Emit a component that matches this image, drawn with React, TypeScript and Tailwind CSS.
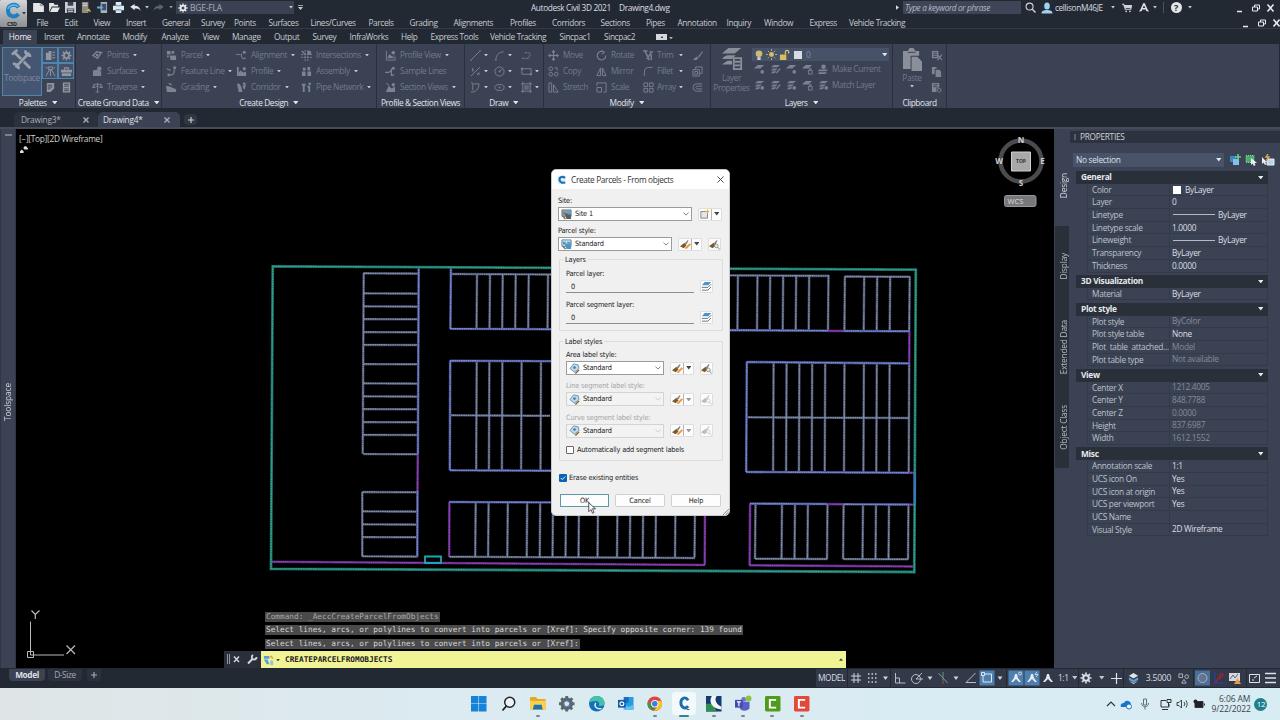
import type { ReactNode } from 'react'
import clsx from 'clsx'

type Item = { label: string; w: number }

const menu: Item[] = [
  { label: 'File', w: 28 },
  { label: 'Edit', w: 29 },
  { label: 'View', w: 32.5 },
  { label: 'Insert', w: 36 },
  { label: 'General', w: 39 },
  { label: 'Survey', w: 33 },
  { label: 'Points', w: 34.5 },
  { label: 'Surfaces', w: 42 },
  { label: 'Lines/Curves', w: 58 },
  { label: 'Parcels', w: 41 },
  { label: 'Grading', w: 44 },
  { label: 'Alignments', w: 56.5 },
  { label: 'Profiles', w: 42 },
  { label: 'Corridors', w: 48.5 },
  { label: 'Sections', w: 45.5 },
  { label: 'Pipes', w: 31.5 },
  { label: 'Annotation', w: 49 },
  { label: 'Inquiry', w: 37.5 },
  { label: 'Window', w: 45.5 },
  { label: 'Express', w: 39.5 },
  { label: 'Vehicle Tracking', w: 60 },
]

const ribbonTabs: Item[] = [
  { label: 'Insert', w: 33 },
  { label: 'Annotate', w: 45.5 },
  { label: 'Modify', w: 39 },
  { label: 'Analyze', w: 41 },
  { label: 'View', w: 29.5 },
  { label: 'Manage', w: 42 },
  { label: 'Output', w: 38.5 },
  { label: 'Survey', w: 37 },
  { label: 'InfraWorks', w: 51.5 },
  { label: 'Help', w: 29.5 },
  { label: 'Express Tools', w: 59.5 },
  { label: 'Vehicle Tracking', w: 69.5 },
  { label: 'Sincpac1', w: 44.5 },
  { label: 'Sincpac2', w: 52 },
]

const S = { fill: 'none', stroke: 'currentColor', strokeWidth: 1 }

const layerStack = (
  <>
    <path d="M4 1h7L8 3.500H1zM3 5h5.500L6 7H1zM3 8h4L5 10H1z" fill="currentColor" />
  </>
)

// 12x12 glyphs
const glyphs: Record<string, ReactNode> = {
  points: <><path d="M1 6l4-4 5 1-4 6z" {...S} strokeWidth={1.500} /><circle cx="5.500" cy="5.500" r="1.500" fill="currentColor" /><path d="M9 0l1 2 2 .5-2 1z" fill="currentColor" /></>,
  surfaces: <><path d="M1 5l4-1 5 2v5H1z" fill="currentColor" /><circle cx="8" cy="3" r="2.500" fill="currentColor" /></>,
  traverse: <path d="M6 1v10M2 2.500h8M2 3L.5 6h3zM10 3L8.500 6h3zM4 11h4M4.500 5h3" {...S} />,
  parcel: <path d="M1 1h4v4H1zM6 1h3v3H6zM4 6h7v5H5zM1 6h2v2H1z" fill="currentColor" />,
  feature: <><path d="M1 3l4 2M4 10c5 0 5-3 5-6" {...S} strokeWidth={1.300} /><circle cx="9.500" cy="2" r="1.700" fill="currentColor" /><circle cx="3" cy="9.800" r="1.500" fill="currentColor" /></>,
  grading: <><path d="M0 4l4 1 7 3v3H1z" fill="currentColor" /><path d="M2 2l3-1 2 3z" fill="currentColor" /></>,
  align: <><path d="M0 5h5M7 9h4M6 4v4l3 2" {...S} /><circle cx="9" cy="2.500" r="1.700" fill="currentColor" /></>,
  profile: <><path d="M1 1v10h10V6L8 7 5 5 3 7V1z" fill="currentColor" /><circle cx="9" cy="3" r="1.800" fill="currentColor" /></>,
  corridor: <><path d="M1 2h3l2 4 1 5H3z" fill="currentColor" /><path d="M7 4l4-1-2 6z" fill="currentColor" /><circle cx="9" cy="2" r="1.500" fill="currentColor" /></>,
  intersect: <><path d="M4.500 0v12M7.500 0v12M0 5h12M0 8h12" {...S} strokeDasharray="2.500 .8" /><circle cx="9" cy="3" r="2.200" fill="currentColor" /><path d="M1 1l3 3" {...S} strokeWidth={1.500} /></>,
  assembly: <path d="M1 6h4v5H1zM7 6h4v5H7zM2 2h3v3H2zM7 1h3v4H7z" fill="currentColor" />,
  pipe: <><path d="M1 2h4v2H4v7H2V4H1zM7 4h3v7H8V6H7z" fill="currentColor" /><circle cx="9.500" cy="2" r="1.500" fill="currentColor" /></>,
  pview: <><path d="M1.500 1v10H11V7M3 9l2-4 3 3 2-2" {...S} /><circle cx="9" cy="3" r="2" fill="currentColor" /><path d="M3 9l2-4 5 4z" fill="currentColor" /></>,
  sample: <><path d="M0 7h4l3-2M7 3v8M7 10h3" {...S} strokeWidth={1.300} /><circle cx="9" cy="2.500" r="1.700" fill="currentColor" /></>,
  section: <><path d="M1 11L4 4l3 3 4-2v6z" fill="currentColor" /><circle cx="9" cy="3" r="1.800" fill="currentColor" /><path d="M1 1l4 3" {...S} /></>,
  line: <path d="M1.500 10.500l9-9M0 11h2M10 1h2" {...S} />,
  arc: <><path d="M2 11C2 6 5 2 10.500 2" {...S} /><circle cx="2" cy="11" r=".8" fill="currentColor" /></>,
  pline: <path d="M1 9h9M4 3h4c3 0 3 4 0 4" {...S} strokeDasharray="3 1" />,
  xline: <path d="M1 11L11 1M2 3l2 2M3 2v4M8 8l3 1M8 10l2-3" {...S} />,
  circle: <><circle cx="6" cy="6" r="5" {...S} /><path d="M6 6l3-3" {...S} /><circle cx="6" cy="6" r="1" fill="currentColor" /></>,
  rect: <><path d="M1 3h10v6H1z" {...S} /><path d="M0 2h2v2H0zM10 8h2v2h-2z" fill="currentColor" /></>,
  poly: <path d="M1 1h2M1 11c6 0 8-3 9-9H3v7" {...S} />,
  ellipse: <><ellipse cx="6" cy="6" rx="5" ry="3.300" {...S} /><circle cx="6" cy="6" r="1" fill="currentColor" /></>,
  hatch: <><path d="M2 0v12M10 0v12M0 2h12M0 10h12" {...S} /><path d="M3.500 3.500h5v5h-5z" fill="currentColor" opacity=".6" /></>,
  move: <path d="M6 1v10M1 6h10M4.500 2.500L6 1l1.500 1.500M4.500 9.500L6 11l1.500-1.500M2.500 4.500L1 6l1.500 1.500M9.500 4.500L11 6 9.500 7.500" {...S} strokeWidth={1.300} />,
  rotate: <path d="M9 2.500A4.700 4.700 0 1010.700 6M6 .5l3 2-2.500 2" {...S} strokeWidth={1.200} />,
  trim: <path d="M0 1h5M2 1l5 10M9 3L4 10M7 2h4M9 5v6" {...S} strokeWidth={1.500} />,
  erase: <path d="M11.500 1L7 6.500 5.500 9 8 7.500 12 2zM5 7l2 2-2 2H1z" fill="currentColor" />,
  copy: <><circle cx="3" cy="3" r="2" {...S} /><circle cx="9" cy="9" r="2" {...S} /><circle cx="3" cy="9" r="2" {...S} /><path d="M7 2h3v3" {...S} /></>,
  mirror: <path d="M5 2v8.500H1zM7 2v8.500h4z" {...S} />,
  fillet: <path d="M1.500 11V7c0-4 2-5.500 5-5.500h4" {...S} />,
  explode: <path d="M1 4h7v7H1zM4 4V1h7v7H8M3 6h3v3H3z" {...S} />,
  stretch: <path d="M1 1h3v10H1zM6 3l5 8H6z" {...S} />,
  scale: <path d="M1 6h5v5H1zM1 4V1h10v10H8" {...S} />,
  array: <path d="M1 1h4v4H1zM7 1h4v4H7zM1 7h4v4H1zM7 7h4v4H7z" {...S} />,
  offset: <path d="M11 2H5C0 2 0 10 5 10h6M11 4.500H6c-2.500 0-2.500 3 0 3h5" {...S} />,
  layA: <><path d="M4 1h7L7 5H0z" fill="currentColor" /><circle cx="9" cy="8.500" r="2" fill="currentColor" /></>,
  layB: <>{layerStack}<path d="M11 5l-4 5" {...S} strokeWidth={1.500} /></>,
  layC: <>{layerStack}<circle cx="9" cy="8.500" r="2" fill="currentColor" /></>,
  layD: <><path d="M4 1h7L7 5H0z" fill="currentColor" /><path d="M7 7h4v4H7zM8 7V5h2v2" {...S} /></>,
  current: <><circle cx="6" cy="3" r="2.500" fill="currentColor" /><path d="M1 6h10L9 8H0zM1 9h9l-2 2H0z" fill="currentColor" /></>,
  cut: <><path d="M1 1h7v8H1z" fill="currentColor" /><path d="M2.500 3h4M2.500 5h4M2.500 7h4" stroke="#3b4252" /><path d="M7 5l5 6M12 5l-5 6" {...S} strokeWidth={1.300} /></>,
  clip: <path d="M1 1h5v2H4v6H1zM5 4h4l2 2v6H5z" fill="currentColor" />,
  special: <><path d="M1 1h8v5H6v5H1z" fill="currentColor" /><path d="M2.500 3h5M2.500 5h4" stroke="#3b4252" /><circle cx="9" cy="9" r="2" {...S} /></>,
  prospector: <path d="M1 3h3V1h3v10H1zM8 2h3v1H8zM8 5h3v1H8zM8 8h3v1H8z" fill="currentColor" />,
  gear: <><circle cx="6" cy="6" r="2.800" {...S} strokeWidth={2} /><path d="M6 .5v11M.5 6h11M2 2l8 8M10 2l-8 8" {...S} strokeWidth={1.600} strokeDasharray="2 7.300" /></>,
  tripod: <path d="M4 1h4v3H4zM6 4v7M5 4l-4 7M7 4l4 7M1 2h2M9 2h2" {...S} />,
  toolbox: <><path d="M0 4h12v3H0zM1 8h10v3H1z" fill="currentColor" /><path d="M4 4V2h4v2" {...S} strokeWidth={1.300} /></>,
  note: <><path d="M2 1h8v6l-4 4H2z" fill="currentColor" /><path d="M3 3.500h5M3 5.500h5M3 7.500h3" stroke="#3b4252" /></>,
  sheet: <><path d="M2 .5h8v11H2z" fill="currentColor" /><path d="M3.500 2.500h5M3.500 4.500h5M3.500 7.500h5M3.500 9.500h5" stroke="#3b4252" /></>,
}

function Ico({ n, className = 'size-[11px] text-[#7d8391]' }: { n: string; className?: string }) {
  return (
    <svg viewBox="0 0 12 12" className={clsx('shrink-0', className)}>
      {glyphs[n]}
    </svg>
  )
}

function Caret({ className = 'text-[#c3c8d0]', big = false }: { className?: string; big?: boolean }) {
  return (
    <svg viewBox="0 0 6 4" className={clsx('shrink-0', big ? 'h-[3.500px] w-[5.500px]' : 'h-[2.500px] w-[4px]', className)}>
      <path d="M0 0h6L3 4z" fill="currentColor" />
    </svg>
  )
}

function Slot({ w = 16, children }: { w?: number; children?: ReactNode }) {
  return (
    <div className="flex h-full shrink-0 items-center justify-center" style={{ width: w }}>
      {children}
    </div>
  )
}

function WinButtons({ small = false }: { small?: boolean }) {
  return (
    <svg viewBox="0 0 44 12" className={clsx('h-3 w-11 shrink-0 text-[#e8eaed]', small && '-mr-1')}>
      <path d="M4 9.500h5" stroke="currentColor" strokeWidth="1.500" />
      <path d="M19.500 5h5v4h-5zM21.500 5V3h5v4h-2" fill="none" stroke="currentColor" />
      <path d="M34.500 2.500l6 7M40.500 2.500l-6 7" stroke="currentColor" strokeWidth="1.600" />
    </svg>
  )
}

function TitleBar() {
  return (
    <div className="flex h-[15px] items-center pl-[3px] text-[#d8dbe0]">
      <Slot><svg viewBox="0 0 12 10" className="h-[9px] w-[11px]"><path d="M0 0h8l4 3v7H0z" fill="#e4e6e8" /><path d="M8 0v3h4" fill="none" stroke="#888" /></svg></Slot>
      <Slot><svg viewBox="0 0 12 10" className="h-[9px] w-[11px]"><path d="M0 0h5l1 2h4v2H3L0 10z" fill="#e4e6e8" /><path d="M3.500 5H12l-2.500 5H1z" fill="#e4e6e8" /></svg></Slot>
      <Slot><svg viewBox="0 0 12 12" className="size-[11px]"><path d="M0 0h12v12H0z" fill="#c9ccd1" /><path d="M3 0h6v4H3zM2 7h8v5H2z" fill="#3a414d" /><path d="M3 8.500h6M3 10.500h6" stroke="#ddd" /></svg></Slot>
      <Slot><svg viewBox="0 0 12 12" className="size-[11px]"><path d="M1 0h7v12H1z" fill="#8e8b80" /><path d="M2 2h5M2 4h5" stroke="#ddd" /><path d="M5 9l4-2 2 4z" fill="#e0a94e" /></svg></Slot>
      <Slot><svg viewBox="0 0 12 12" className="size-[11px]"><path d="M4 0h7v12H4z" fill="#a9b1ba" /><path d="M5 2h5v7H5z" fill="#36526e" /><path d="M0 5h4V3l3 3-3 3V7H0z" fill="#67a6db" /></svg></Slot>
      <Slot><svg viewBox="0 0 12 12" className="size-[11px]"><path d="M3 0h6v4H3zM0 4h12v5H0zM3 8h6v4H3z" fill="#e4e6e8" /><path d="M3 4h6M3 8.500h6" stroke="#6aa9d8" strokeWidth="1.500" /></svg></Slot>
      <Slot w={18}><svg viewBox="0 0 12 8" className="h-[7px] w-[11px]"><path d="M0 3l5-3v2c4 0 6 2 7 6-2-3-4-3-7-3v2z" fill="#e4e6e8" /></svg></Slot>
      <Slot w={5}><Caret /></Slot>
      <Slot w={19}><svg viewBox="0 0 12 8" className="h-[7px] w-[11px]"><path d="M12 3L7 0v2C3 2 1 4 0 8c2-3 4-3 7-3v2z" fill="#5d6470" /></svg></Slot>
      <Slot w={5}><Caret className="text-[#8e939c]" /></Slot>
      <div className="ml-[3px] flex h-[13px] w-[118px] items-center bg-[#3a4153] pl-[2px] pr-[1px] text-[#a9aebb]">
        <Ico n="gear" className="mr-[2px] size-[10px] text-[#eceef0]" />
        <span className="flex-1 text-[8.500px] tracking-[-0.200px]">BGE-FLA</span>
        <Caret />
      </div>
      <svg viewBox="0 0 6 6" className="ml-1 size-[5px]"><path d="M0 .5h6" stroke="#ccc" /><path d="M0 2.500h6L3 6z" fill="#ccc" /></svg>
      <div className="ml-[228px] flex w-[365px] gap-2 whitespace-pre pt-px text-[#dcdfe3]">
        <span className="w-[80px]">Autodesk Civil 3D 2021</span>
        <span>Drawing4.dwg</span>
      </div>
      <svg viewBox="0 0 4 6" className="h-[5px] w-[3px]"><path d="M0 0v6l4-3z" fill="#dcdfe3" /></svg>
      <div className="ml-1 flex h-[13px] w-[118px] items-center bg-[#3e4557] pl-[2px] italic text-[#b4b9c4]">Type a keyword or phrase</div>
      <Slot w={18}><svg viewBox="0 0 12 12" className="size-[11px]"><circle cx="5" cy="5" r="3.800" fill="none" stroke="#d0d3d8" strokeWidth="1.200" /><path d="M8 8l3.500 3.500" stroke="#d0d3d8" strokeWidth="1.600" /></svg></Slot>
      <Slot w={15}><svg viewBox="0 0 12 12" className="size-[12px]"><ellipse cx="6" cy="4" rx="2.800" ry="3.500" fill="#9fd0f2" /><path d="M.5 11.500c0-3 3-3.500 5.500-3.500s5.500.5 5.500 3.500z" fill="#9fd0f2" /></svg></Slot>
      <span className="ml-[1px] w-[56px]">cellisonM46JE</span>
      <Caret />
      <Slot w={24}><svg viewBox="0 0 12 12" className="size-[10px]"><path d="M0 1.500h2l2 6h6.500l1-4.500H3" fill="none" stroke="#cfd2d6" strokeWidth="1.400" /><path d="M3 3.500h8.500L10.500 6H4z" fill="#cfd2d6" /><circle cx="5" cy="10" r="1.100" fill="#cfd2d6" /><circle cx="9.500" cy="10" r="1.100" fill="#cfd2d6" /></svg></Slot>
      <Slot w={10}><svg viewBox="0 0 12 12" className="size-[11px]"><path d="M6 1l4 9M6 1L2 10M3.500 7.500h5" fill="none" stroke="#dfe1e4" strokeWidth="1.800" /><path d="M0 11l1.500-2.500L4 10zM12 11l-1.500-2.500L8 10z" fill="#dfe1e4" /></svg></Slot>
      <Slot w={12}><Caret /></Slot>
      <div className="ml-[2px] h-[11px] w-px bg-[#4b525e]" />
      <Slot w={24}><div className="flex size-[11px] items-center justify-center rounded-full bg-[#e4e6e8] text-[9px] font-bold text-[#222933]">?</div></Slot>
      <Caret />
      <div className="ml-auto pr-[3px]"><WinButtons /></div>
    </div>
  )
}

function AppHeader() {
  return (
    <header className="flex h-[29px] border-b border-[#343b46]">
      <div className="flex h-[27px] w-[27px] shrink-0 items-center rounded-[1px] bg-gradient-to-b from-[#d4d6d9] to-[#8d9095] pl-[4px]">
        <svg viewBox="0 0 18 26" className="h-[26px] w-[18px]">
          <path d="M14.500 6.500C12 2 4 3 4 9.500S11 17 14.500 13" fill="none" stroke="#1f7fc0" strokeWidth="4" />
          <path d="M14 5.500C11 2.500 5 4 4 8" fill="none" stroke="#56b6e6" strokeWidth="2" />
          <text x="3" y="25" fontSize="5.500" fontWeight="700" fill="#222" fontFamily="Open Sans">C3D</text>
        </svg>
        <Caret className="text-[#333]" />
      </div>
      <div className="flex-1">
        <TitleBar />
        <nav className="flex h-[15px] items-center pl-[9.500px] text-[#c6cad1]">
          {menu.map((m) => (
            <span key={m.label} className="shrink-0 whitespace-nowrap" style={{ width: m.w }}>{m.label}</span>
          ))}
          <div className="ml-auto pr-[1px]"><WinButtons small /></div>
        </nav>
      </div>
    </header>
  )
}

function Tool({ icon, label, caret = true, w }: { icon: string; label: string; caret?: boolean; w?: number }) {
  return (
    <div className="flex h-4 items-center whitespace-nowrap" style={{ width: w }}>
      <Ico n={icon} className="mr-1 size-[11px] text-[#7d8391]" />
      <span className={caret ? 'mr-1' : ''}>{label}</span>
      {caret && <Caret />}
    </div>
  )
}

function Panel({ title, w, caret = true, titleW, children }: { title: string; w?: number; caret?: boolean; titleW?: number; children: ReactNode }) {
  return (
    <section className="flex shrink-0 flex-col border-r border-[#2a303b]" style={{ width: w }}>
      <div className="flex h-[53px] pt-[3px]">{children}</div>
      <div className="flex h-[11px] items-center justify-center gap-[5px] whitespace-nowrap text-[#e3e6ea]" style={{ width: titleW }}>
        {title}
        {caret && <Caret big className="text-[#e3e6ea]" />}
      </div>
    </section>
  )
}

function IconBtn({ n, on = true }: { n: string; on?: boolean }) {
  return (
    <div className={clsx('flex size-4 items-center justify-center border', on ? 'border-[#4d85ad] bg-[#43516b]' : 'border-transparent')}>
      <Ico n={n} className="size-[11px] text-[#9297a1]" />
    </div>
  )
}

const draw = [
  ['line', 'arc', 'pline'],
  ['xline', 'circle', 'rect'],
  ['poly', 'ellipse', 'hatch'],
]

function Ribbon() {
  return (
    <div className="flex h-[64px] border-r border-[#222933] bg-[#3b4253] pl-[1px] text-[#737a8a]">
      <Panel title="Palettes" w={75}>
        <div className="ml-px flex h-[49px] w-[40px] flex-col items-center border border-[#4d85ad] bg-[#455672]">
          <svg viewBox="0 0 24 24" className="mt-[1px] size-[22px]" fill="none" stroke="#9aa0aa" strokeWidth="3">
            <path d="M3 3l8 8M14 14l7 7" />
            <path d="M20 4L5 20M16 1.500c-1 3 2 6.500 6 5.500M8 22c1-3-2-6.500-6-5.500" />
            <path d="M1 6l6-5" />
          </svg>
          <span className="mt-[1px] text-[#7f8899]">Toolspace</span>
        </div>
        <div className="grid h-fit grid-cols-2">
          <IconBtn n="prospector" />
          <IconBtn n="gear" />
          <IconBtn n="tripod" />
          <IconBtn n="toolbox" />
          <IconBtn n="note" on={false} />
          <IconBtn n="sheet" on={false} />
        </div>
      </Panel>
      <Panel title="Create Ground Data" w={86}>
        <div className="pl-4">
          <Tool icon="points" label="Points" />
          <Tool icon="surfaces" label="Surfaces" />
          <Tool icon="traverse" label="Traverse" />
        </div>
      </Panel>
      <Panel title="Create Design" w={215}>
        <div className="w-[74px] pl-[4px]">
          <Tool icon="parcel" label="Parcel" />
          <Tool icon="feature" label="Feature Line" />
          <Tool icon="grading" label="Grading" />
        </div>
        <div className="w-[65px]">
          <Tool icon="align" label="Alignment" />
          <Tool icon="profile" label="Profile" />
          <Tool icon="corridor" label="Corridor" />
        </div>
        <div>
          <Tool icon="intersect" label="Intersections" />
          <Tool icon="assembly" label="Assembly" />
          <Tool icon="pipe" label="Pipe Network" />
        </div>
      </Panel>
      <Panel title="Profile & Section Views" w={88} caret={false}>
        <div className="pl-[8px]">
          <Tool icon="pview" label="Profile View" />
          <Tool icon="sample" label="Sample Lines" caret={false} />
          <Tool icon="section" label="Section Views" />
        </div>
      </Panel>
      <Panel title="Draw" w={79}>
        <div className="pl-[5px]">
          {draw.map((row, r) => (
            <div key={r} className="flex h-4 items-center">
              {row.map((n, i) => (
                <div key={n} className={clsx('flex items-center gap-[3px]', i === 0 ? 'w-6' : 'w-[27px]')}>
                  <Ico n={n} />
                  {!(r === 0 && i === 2) && <Caret />}
                </div>
              ))}
            </div>
          ))}
        </div>
      </Panel>
      <Panel title="Modify" w={167}>
        <div className="w-[52px] pl-[4px]">
          <Tool icon="move" label="Move" caret={false} />
          <Tool icon="copy" label="Copy" caret={false} />
          <Tool icon="stretch" label="Stretch" caret={false} />
        </div>
        <div className="w-[47px]">
          <Tool icon="rotate" label="Rotate" caret={false} />
          <Tool icon="mirror" label="Mirror" caret={false} />
          <Tool icon="scale" label="Scale" caret={false} />
        </div>
        <div className="w-[49px]">
          {[['trim', 'Trim'], ['fillet', 'Fillet'], ['array', 'Array']].map(([n, label]) => (
            <div key={n} className="flex h-4 w-[40px] items-center gap-[3px]">
              <Ico n={n} />
              <span className="flex-1">{label}</span>
              <Caret />
            </div>
          ))}
        </div>
        <div className="[&>div]:flex [&>div]:h-4 [&>div]:items-center">
          <div><Ico n="erase" /></div>
          <div><Ico n="explode" /></div>
          <div><Ico n="offset" /></div>
        </div>
      </Panel>
      <Panel title="Layers" w={182}>
        <div className="flex w-[41px] flex-col items-center leading-[10px]">
          <svg viewBox="0 0 24 24" className="mb-[3px] mt-[1px] size-[22px] text-[#8a8f9a]">
            <path d="M8 0h14l-7 6H1zM7 8h9l-4 4H1l3-3zM7 14h5v4H1z" fill="currentColor" />
            <path d="M14 11h8v12h-8z" fill="#3b4253" stroke="currentColor" strokeWidth="2" />
            <path d="M15 15h6M15 19h6" stroke="currentColor" strokeWidth="2" />
          </svg>
          <span>Layer</span>
          <span>Properties</span>
        </div>
        <div>
          <div className="mt-px flex h-[13px] w-[137px] items-center gap-[2px] bg-[#475168] pl-[2px] pr-[2px]">
            <svg viewBox="0 0 12 12" className="size-[10px]"><circle cx="6" cy="4.500" r="4" fill="#cdbb70" /><path d="M4 8.500h4V12H4z" fill="#c9ccd1" /></svg>
            <svg viewBox="0 0 12 12" className="size-[11px]"><circle cx="6" cy="6" r="2.700" fill="#d3bf6a" /><path d="M6 0v12M0 6h12M2 2l8 8M10 2l-8 8" stroke="#d3bf6a" strokeDasharray="2 8" /></svg>
            <svg viewBox="0 0 12 12" className="size-[11px]"><path d="M1 6h7v6H1z" fill="#d8be62" /><path d="M7 6V3c0-2 3.500-2 3.500 0v2" fill="none" stroke="#d8be62" strokeWidth="1.500" /></svg>
            <div className="ml-[2px] size-2 bg-[#d9dde2]" />
            <span className="ml-[2px] flex-1 text-[#858c9d]">0</span>
            <Caret big className="text-[#dfe2e6]" />
          </div>
          {[['layA', 'layB', 'layA', 'layD', 'current', 'Make Current'], ['layC', 'layB', 'layC', 'layD', 'layC', 'Match Layer']].map((row) => (
            <div key={row[5]} className="flex h-4 items-center gap-[5px] pl-[2px]">
              {row.slice(0, 5).map((n, i) => <Ico key={i} n={n} />)}
              <span className="-ml-[2px] whitespace-nowrap">{row[5]}</span>
            </div>
          ))}
        </div>
      </Panel>
      <Panel title="Clipboard" caret={false} titleW={53}>
        <div className="ml-[7px] flex w-6 flex-col items-center leading-[10px]">
          <svg viewBox="0 0 20 24" className="mb-[2px] mt-[1px] h-[23px] w-[19px] text-[#8a8f9a]">
            <path d="M0 3h5l2-3h4l2 3h4v5H8v14H0z" fill="currentColor" />
            <path d="M9 9h6l5 5v10H9z" fill="currentColor" />
            <path d="M5 4.500h8" stroke="#3b4253" />
          </svg>
          <span>Paste</span>
          <Caret className="mt-[2px] text-[#c3c8d0]" />
        </div>
        <div className="ml-[7px] [&>div]:flex [&>div]:h-4 [&>div]:items-center">
          <div><Ico n="cut" /></div>
          <div><Ico n="clip" /></div>
          <div><Ico n="special" /></div>
        </div>
      </Panel>
    </div>
  )
}

function DocTabs() {
  return (
    <div className="flex h-[21px] items-end border-b-2 border-[#464c59] pl-[14px] text-[#aab0bb]">
      <div className="flex h-[15px] w-[84px] items-center justify-between rounded-t-[5px] bg-[#2b323e] pl-[7px] pr-[9px]">
        <span className="tracking-[-0.200px]">Drawing3*</span>
        <svg viewBox="0 0 6 6" className="size-[6px]"><path d="M.5 .5l5 5M5.500 .5l-5 5" stroke="#aab0bb" strokeWidth="1.300" /></svg>
      </div>
      <div className="flex h-[15px] w-[82px] items-center justify-between rounded-t-[5px] bg-[#3b4253] pl-[5px] pr-[10px] text-[#e0e3e8]">
        <span className="tracking-[-0.200px]">Drawing4*</span>
        <svg viewBox="0 0 6 6" className="size-[6px]"><path d="M.5 .5l5 5M5.500 .5l-5 5" stroke="#aab0bb" strokeWidth="1.300" /></svg>
      </div>
      <div className="mb-[2px] ml-1 flex h-[11px] w-[13px] items-center justify-center rounded-[4px] bg-[#303742]">
        <svg viewBox="0 0 6 6" className="size-[6px]"><path d="M3 0v6M0 3h6" stroke="#c6cad1" strokeWidth="1.200" /></svg>
      </div>
    </div>
  )
}

type Seg = [number, number, number, number]

const rails = (xs: number[], y1: number, y2: number): Seg[] => xs.map((x) => [x, y1, x - 0.5, y2])
const rungs = (ys: number[], x1: number, x2: number): Seg[] => ys.map((y) => [x1, y, x2, y + 0.3])

const lots: Seg[] = [
  [363.7, 273.3, 362.7, 454],
  ...rungs([273.3, 293.3, 306.3, 319, 332, 344.7, 364, 383.3, 396.3, 409, 422, 434.7, 454], 363.5, 418),
  [362.3, 492, 362.3, 556.5],
  ...rungs([492, 511.3, 524.3, 537, 556.3], 362.3, 417.5),
  [450.7, 274, 828.7, 275.9],
  ...rails([477, 490, 502.7, 515.7, 528.7, 548, 737.9, 757.5, 770.2, 783.2, 796.2, 809.2, 828.5], 275, 330),
  [844.7, 276.5, 909.7, 276.8],
  ...rails([844.9, 864.2, 877.2, 890.2, 909.7], 276.5, 331),
  ...rails([476.7, 489.4, 502.4, 521.6, 541], 361, 470.5),
  [450, 415.3, 550, 415.8],
  ...rails([773.6, 786.6, 799.4, 812.2, 825.2, 844.5, 863.9, 876.8, 889.6, 909.2], 363, 472.5),
  [746.5, 417.3, 909, 418],
  ...rails([475.7, 488.6, 507.8, 527.2, 540.2, 553, 566, 579, 598, 617.5, 630.3, 643.2, 656, 675.5, 695], 502.5, 557.5),
  [449.3, 556.7, 695, 558],
  ...rails([755.5, 782, 795, 807.9, 827.5], 504.5, 559),
  [755.3, 558.7, 827.3, 559],
  ...rails([843.6, 863, 876, 889, 908.5], 504.5, 559.3),
  [843.3, 559, 908.3, 559.3],
]

const streets: Seg[] = [
  [418.7, 267, 417.9, 454],
  [417.5, 491, 417.3, 557],
  [450.9, 267, 450.4, 329],
  [450.4, 328.7, 828, 330.7],
  [844, 331, 909.7, 331.3],
  [450.2, 360.7, 449.8, 470.3],
  [450, 360.7, 560, 361.2],
  [450, 470.3, 560, 470.8],
  [746.8, 361.8, 746.2, 472],
  [746.8, 362, 909.5, 363.4],
  [746.2, 472, 909, 472.7],
  [449.3, 502, 705, 503],
  [750, 503.6, 827, 504],
  [844, 504.3, 909, 504.5],
]

const easements: Seg[] = [
  [271.5, 561.7, 705, 565],
  [705, 503, 704.7, 565],
  [417.8, 454, 417.5, 491],
  [449.4, 502, 449.2, 557],
  [828, 330.9, 844, 331],
  [909.4, 331.3, 909.2, 363.3],
  [750.1, 503.6, 749.6, 565.5],
  [749.6, 565.3, 914, 566.5],
  [827, 504.1, 844, 504.3],
  [908, 504.5, 914.5, 504.7],
  [908, 472.6, 914.5, 472.8],
]

function Lines({ segs, glow, color }: { segs: Seg[]; glow: string; color: string }) {
  const d = segs.map(([x1, y1, x2, y2]) => `M${x1} ${y1}L${x2} ${y2}`).join('')
  return (
    <g fill="none">
      <path d={d} stroke={glow} strokeWidth="2.600" />
      <path d={d} stroke={color} strokeWidth="1.400" strokeDasharray="1.800 .4" />
    </g>
  )
}

function ModelSpace() {
  return (
    <svg viewBox="16 129 1038 539" className="absolute inset-0 h-full w-full">
      <Lines segs={easements} glow="#4f1f75" color="#8f48b4" />
      <Lines segs={lots} glow="#344064" color="#888f9c" />
      <Lines segs={streets} glow="#3b4788" color="#808cc8" />
      <g fill="none">
        <path d="M272.700 266.300L915.800 269.700 914.300 572 271 568.800z" stroke="#176a66" strokeWidth="2.800" />
        <path d="M272.700 266.300L915.800 269.700 914.300 572 271 568.800z" stroke="#3da58a" strokeWidth="1.300" strokeDasharray="2 .5" />
        <path d="M914.800 473v31" stroke="#3b74b8" strokeWidth="2.500" />
        <path d="M425 556.500h16v6.500h-16z" stroke="#1fa5b5" strokeWidth="1.800" />
      </g>

      {/* UCS icon */}
      <g fill="none" stroke="#b9bcc0">
        <path d="M30.500 621.500v33.500h33.500M27.500 651.500h6v6h-6z" />
        <path d="M31.500 610.500l3.800 4v4.500M39.500 610.500l-4.200 4M66.500 645.500l8.500 8.500M75 645.500l-8.500 8.500" strokeWidth="1.200" />
      </g>

      {/* view cube */}
      <circle cx="1021" cy="161" r="20.500" fill="none" stroke="#4b4b4e" strokeWidth="4.500" />
      <path d="M1011.500 152h19v19h-19z" fill="#a8a8a8" stroke="#cfcfcf" />
      <g fontFamily="Open Sans" textAnchor="middle" fill="#d0d0d0" fontSize="8" fontWeight="700" letterSpacing="0">
        <text x="1021" y="163.300" fontSize="5" fill="#333">TOP</text>
        <text x="1021" y="143">N</text>
        <text x="1021" y="186">S</text>
        <text x="999" y="164">W</text>
        <text x="1042.500" y="164">E</text>
      </g>
      <rect x="1004.500" y="195.500" width="31.500" height="11" rx="2" fill="#77777c" stroke="#98989c" />
      <text x="1015.500" y="203.800" fontSize="7.500" fill="#dcdcdc" fontFamily="Open Sans" textAnchor="middle" letterSpacing="0">WCS</text>
    </svg>
  )
}

function StyleIcon({ kind }: { kind: 'site' | 'parcel' | 'tag' }) {
  if (kind === 'tag')
    return (
      <svg viewBox="0 0 12 12" className="size-[11px] shrink-0">
        <path d="M1 6l4-5 5 1 1 4-5 4z" fill="#bcd9ee" stroke="#54809f" strokeWidth=".8" />
        <circle cx="6" cy="5" r="1.500" fill="#54809f" />
        <path d="M7 11.500l4-4" stroke="#8a5a2c" strokeWidth="1.500" />
      </svg>
    )
  return (
    <svg viewBox="0 0 12 12" className="size-[11px] shrink-0">
      <path d="M1 1h10v7H1z" fill={kind === 'site' ? '#8fa5b3' : '#d3e4f0'} stroke="#5f7d92" />
      <path d="M2 3h3v3H2z" fill={kind === 'site' ? '#a8745c' : '#4d93c4'} />
      <path d="M4 5h7v6H6z" fill={kind === 'site' ? '#55616b' : '#4f95c6'} />
      <path d="M6 3h5v3H8z" fill="#57a3d6" />
      <path d="M2 8l3 3" stroke="#8a6a4c" strokeWidth="1.500" />
    </svg>
  )
}

function Combo({ icon, value, w, disabled = false }: { icon: 'site' | 'parcel' | 'tag'; value: string; w: number; disabled?: boolean }) {
  return (
    <div
      className={clsx('flex h-[14px] items-center gap-[3px] border pl-[2px] pr-[2px]', disabled ? 'border-[#d4d4d4] bg-[#f3f3f3]' : 'border-[#9b9b9b] bg-white')}
      style={{ width: w }}
    >
      <StyleIcon kind={icon} />
      <span className="flex-1 text-[#222]">{value}</span>
      <svg viewBox="0 0 8 5" className="h-[4px] w-[6px]"><path d="M.5 .5L4 4 7.500 .5" fill="none" stroke={disabled ? '#bbb' : '#555'} /></svg>
    </div>
  )
}

function Brush({ pencil = false, dim = false }: { pencil?: boolean; dim?: boolean }) {
  return (
    <svg viewBox="0 0 12 12" className={clsx('size-[11px]', dim && 'opacity-40 grayscale')}>
      <path d="M0 8l5-4 2 3-3 3z" fill="#7b5a2e" />
      <path d="M5 5l3.500-4 .8.800L7 6z" fill="#8b8376" />
      {pencil ? (
        <path d="M5.500 11l.5-2 4.500-4.500L12 6l-4.500 4.500z" fill="#ee9a3a" />
      ) : (
        <><circle cx="8" cy="7.500" r="2" fill="#e8f0f6" stroke="#777" strokeWidth=".8" /><path d="M9.500 9l2 2.500" stroke="#777" /></>
      )}
    </svg>
  )
}

function SplitBtn({ children, dim = false }: { children: ReactNode; dim?: boolean }) {
  return (
    <div className="flex h-[13px] w-6 items-center rounded-[1px] border border-[#dedede] bg-[#fcfcfc]">
      <div className="flex h-full w-[13px] items-center justify-center border-r border-[#b5b5b5]">{children}</div>
      <div className="flex flex-1 justify-center"><Caret big className={dim ? 'text-[#999]' : 'text-[#444]'} /></div>
    </div>
  )
}

function SmallBtn({ children }: { children: ReactNode }) {
  return <div className="flex size-[13px] items-center justify-center rounded-[1px] border border-[#dedede] bg-[#fcfcfc]">{children}</div>
}

function StyleRow({ label, disabled = false }: { label: string; disabled?: boolean }) {
  return (
    <div>
      <div className={clsx('h-[12px] leading-[12px]', disabled && 'text-[#a5a5a5]')}>{label}</div>
      <div className="flex items-center">
        <Combo icon="tag" value="Standard" w={98} disabled={disabled} />
        <div className="ml-[6px]"><SplitBtn dim={disabled}><Brush pencil /></SplitBtn></div>
        <div className="ml-[6px]"><SmallBtn><Brush dim={disabled} /></SmallBtn></div>
      </div>
    </div>
  )
}

function LayerRow({ label }: { label: string }) {
  return (
    <div className="pr-[9px]">
      <div className="h-[12px] leading-[12px]">{label}</div>
      <div className="flex items-center justify-between">
        <div className="flex h-[13px] w-[128px] items-center border-b border-[#8e8e8e] pl-[5px] pt-px">0</div>
        <SmallBtn>
          <svg viewBox="0 0 12 12" className="size-[11px]">
            <path d="M4 1h7L8 4.500H1z" fill="#4d93c4" />
            <path d="M1 7h6.500L11 3.500M1 10h6.500L11 6.500" fill="none" stroke="#5f6f7c" />
          </svg>
        </SmallBtn>
      </div>
    </div>
  )
}

function Group({ title, className, children }: { title: string; className: string; children: ReactNode }) {
  return (
    <fieldset className={clsx('ml-px w-[164px] rounded-[1px] border border-[#dcdcdc] pl-[6px]', className)}>
      <div className="-ml-[3px] -mt-[6px] h-[12px] w-fit bg-[#f0f0f0] px-[2px] leading-[12px]">{title}</div>
      {children}
    </fieldset>
  )
}

function Dialog() {
  return (
    <div className="absolute left-[535px] top-[40px] h-[347px] w-[179px] overflow-hidden rounded-[5px] border border-[#c9c9c9] bg-[#f0f0f0] text-[#222]">
      <div className="flex h-[19px] items-center bg-white pl-[5px] pr-[5px]">
        <svg viewBox="0 0 12 12" className="size-[10px]">
          <path d="M1 1h10v10H1z" fill="#e3edf3" />
          <path d="M9.500 3.500C7 1 2.500 2.500 3 6s4.500 4 6.500 2.500" fill="none" stroke="#1676b8" strokeWidth="2.600" />
        </svg>
        <span className="ml-[4px] flex-1 text-[8.300px] tracking-[-0.350px] text-[#333]">Create Parcels - From objects</span>
        <svg viewBox="0 0 8 8" className="size-[7px]"><path d="M.5 .5l7 7M7.500 .5l-7 7" stroke="#333" /></svg>
      </div>
      <div className="pl-[6px] pt-[6px] font-['DejaVu_Sans_Condensed','DejaVu_Sans',sans-serif] text-[7.300px] tracking-[-0.150px]">
        <div className="h-[12px] leading-[12px]">Site:</div>
        <div className="flex items-center">
          <Combo icon="site" value="Site 1" w={134} />
          <div className="ml-[6px]">
            <SplitBtn>
              <svg viewBox="0 0 12 12" className="size-[10px]"><path d="M1 3h8v8H1z" fill="#e4e7ea" stroke="#777" /><path d="M9 0l1 2 2 1-2 1-1 2-1-2-2-1 2-1z" fill="#f0b429" /></svg>
            </SplitBtn>
          </div>
        </div>
        <div className="mt-[4px] h-[12px] leading-[12px]">Parcel style:</div>
        <div className="flex items-center">
          <Combo icon="parcel" value="Standard" w={114} />
          <div className="ml-[6px]"><SplitBtn><Brush pencil /></SplitBtn></div>
          <div className="ml-[6px]"><SmallBtn><Brush /></SmallBtn></div>
        </div>
        <Group title="Layers" className="mt-[8px] h-[72px]">
          <div className="mt-[2px] space-y-[6px]">
            <LayerRow label="Parcel layer:" />
            <LayerRow label="Parcel segment layer:" />
          </div>
        </Group>
        <Group title="Label styles" className="mt-[10px] h-[120px]">
          <div className="mt-[1px] space-y-[5.300px]">
            <StyleRow label="Area label style:" />
            <StyleRow label="Line segment label style:" disabled />
            <StyleRow label="Curve segment label style:" disabled />
          </div>
          <div className="mt-[7.500px] flex h-[9px] items-center gap-[3px]">
            <div className="size-[8px] rounded-[1px] border border-[#666] bg-white" />
            Automatically add segment labels
          </div>
        </Group>
        <div className="ml-px mt-[12px] flex h-[9px] items-center gap-[2px]">
          <div className="flex size-[8px] items-center justify-center rounded-[1px] bg-[#0a63b5]">
            <svg viewBox="0 0 8 8" className="size-[6px]"><path d="M1 4l2 2 4-4" fill="none" stroke="#fff" strokeWidth="1.200" /></svg>
          </div>
          Erase existing entities
        </div>
        <div className="ml-[2px] mt-[12px] flex gap-[6px] text-center leading-[12px]">
          <div className="h-[13px] w-[49px] border border-[#5b98a8] bg-[#fdfdfd]">OK</div>
          <div className="h-[13px] w-[50px] rounded-[2px] border border-[#d0d0d0] bg-[#fdfdfd]">Cancel</div>
          <div className="h-[13px] w-[50px] rounded-[2px] border border-[#d0d0d0] bg-[#fdfdfd]">Help</div>
        </div>
      </div>
      <svg viewBox="0 0 8 8" className="absolute bottom-0 right-0 size-[7px]"><path d="M1 8l7-7M4 8l4-4" stroke="#777" /></svg>
    </div>
  )
}

const history = [
  { text: 'Command: _AeccCreateParcelFromObjects', dim: true },
  { text: 'Select lines, arcs, or polylines to convert into parcels or [Xref]: Specify opposite corner: 139 found' },
  { text: 'Select lines, arcs, or polylines to convert into parcels or [Xref]:' },
]

function CommandLine() {
  return (
    <div className="absolute bottom-0 left-[208px] w-[622px] font-['DejaVu_Sans_Mono',monospace] text-[7.750px] tracking-normal">
      <div className="flex flex-col items-start gap-[3.500px] pb-[2.500px] pl-[41px]">
        {history.map((h) => (
          <div key={h.text} className={clsx('h-[10px] whitespace-pre bg-[#4a4a4a] px-[1px] leading-[10px]', h.dim ? 'text-[#a8a8a8]' : 'text-[#d6d6d6]')}>{h.text}</div>
        ))}
      </div>
      <div className="flex h-[17px] items-center bg-[#2a303b]">
        <svg viewBox="0 0 37 17" className="h-[17px] w-[37px]" fill="none" stroke="#d5d8dc">
          <path d="M3.500 3v10M5.500 3v10" stroke="#9096a0" />
          <path d="M10 5.500l5 5.500M15 5.500L10 11" strokeWidth="1.400" />
          <path d="M24 12.500l5-5" strokeWidth="2" />
          <path d="M29 4c-2 1.500-1.500 4.500 1 4.500 1.500 0 2.500-1 2.500-2.500" strokeWidth="1.800" />
        </svg>
        <div className="flex h-full flex-1 items-center bg-[#f1f495] pl-[2px] pr-[3px] pt-px font-bold text-[#222]">
          <svg viewBox="0 0 12 12" className="size-[11px]"><path d="M1 1h6v3H1zM1 5h4l2 5H4z" fill="#58a0d8" /><path d="M8 6h3v5H8z" fill="#8cc4e8" /><path d="M8 1l3 3" stroke="#e8a84a" strokeWidth="2" /></svg>
          <Caret className="mx-[2px] text-[#444]" />
          <span className="ml-[3px] flex-1">CREATEPARCELFROMOBJECTS</span>
          <svg viewBox="0 0 6 4" className="mb-[2px] h-[3px] w-[4px]"><path d="M0 4h6L3 0z" fill="#444" /></svg>
        </div>
      </div>
    </div>
  )
}

type Prop = { k: string; v?: string; dim?: boolean; kind?: 'swatch' | 'line' }

const props: { title: string; rows: Prop[] }[] = [
  {
    title: 'General',
    rows: [
      { k: 'Color', v: 'ByLayer', kind: 'swatch' },
      { k: 'Layer', v: '0' },
      { k: 'Linetype', v: 'ByLayer', kind: 'line' },
      { k: 'Linetype scale', v: '1.0000' },
      { k: 'Lineweight', v: 'ByLayer', kind: 'line' },
      { k: 'Transparency', v: 'ByLayer' },
      { k: 'Thickness', v: '0.0000' },
    ],
  },
  { title: '3D Visualization', rows: [{ k: 'Material', v: 'ByLayer' }] },
  {
    title: 'Plot style',
    rows: [
      { k: 'Plot style', v: 'ByColor', dim: true },
      { k: 'Plot style table', v: 'None' },
      { k: 'Plot  table  attached...', v: 'Model', dim: true },
      { k: 'Plot table type', v: 'Not available', dim: true },
    ],
  },
  {
    title: 'View',
    rows: [
      { k: 'Center X', v: '1212.4005', dim: true },
      { k: 'Center Y', v: '848.7788', dim: true },
      { k: 'Center Z', v: '0.0000', dim: true },
      { k: 'Height', v: '837.6987', dim: true },
      { k: 'Width', v: '1612.1552', dim: true },
    ],
  },
  {
    title: 'Misc',
    rows: [
      { k: 'Annotation scale', v: '1:1' },
      { k: 'UCS icon On', v: 'Yes' },
      { k: 'UCS icon at origin', v: 'Yes' },
      { k: 'UCS per viewport', v: 'Yes' },
      { k: 'UCS Name' },
      { k: 'Visual Style', v: '2D Wireframe' },
    ],
  },
]

function Properties() {
  return (
    <aside className="flex w-[226px] shrink-0 bg-[#3b4253] pl-[1px]">
      <div className="mt-[16px] flex h-[323px] w-[14px] flex-col bg-[#29303a] tracking-[-0.200px] text-[#b5bac4] [&>div]:flex [&>div]:items-center [&>div]:justify-center [&>div]:pl-[4px] [&>div]:[writing-mode:vertical-rl]">
        <div className="h-[81px] bg-[#3b4253] text-[#d5d9df]"><span className="rotate-180">Design</span></div>
        <div className="h-[81px]"><span className="rotate-180">Display</span></div>
        <div className="h-[80px]"><span className="rotate-180">Extended Data</span></div>
        <div className="h-[81px]"><span className="rotate-180">Object Class</span></div>
      </div>
      <div className="flex-1 pl-[1px] pt-[2px] tracking-[-0.280px]">
        <div className="flex h-[12px] items-center bg-[#2c333e] pl-[4px] text-[#d0d4da]">
          <div className="mr-[4px] h-[6px] w-[2px] bg-[#565d6a]" />
          PROPERTIES
        </div>
        <div className="mt-[10px] flex h-[14px] items-center pl-[3px] text-[#dfe2e7]">
          <div className="mr-[5px] flex h-full w-[151px] items-center justify-between bg-[#48536a] px-[3px]">
            No selection
            <Caret big className="text-[#e3e6ea]" />
          </div>
          <svg viewBox="0 0 46 12" className="h-[12px] w-[46px]">
            <path d="M1 2h6v6H1z" fill="#3f86c4" /><path d="M4 5h6v6H4z" fill="#84c0ea" /><path d="M9 0v6M6 3h6" stroke="#6fd08c" strokeWidth="1.500" />
            <path d="M17 1.500h8v7h-8z" fill="#48b06d" stroke="#8ed6a5" strokeDasharray="1 1" /><path d="M22 4v7l1.500-1.500L25 12l1.500-1-1-2H28z" fill="#f0f0f0" />
            <path d="M33 3v7l1.500-1.500L36 11l1.200-.8-1-2H38z" fill="#eee" /><path d="M38 5h7v6h-7z" fill="#b9d5ea" stroke="#e8eef4" /><path d="M39 0l-2 3h3l-2 3" stroke="#eab04c" fill="none" strokeWidth="1.300" />
          </svg>
        </div>
        <div className="ml-[6px] mt-[4px] w-[192px] space-y-[2.500px]">
          {props.map((g) => (
            <div key={g.title}>
              <div className="flex h-[12.700px] items-center justify-between bg-[#29303a] pl-[5px] pr-[5px] font-bold text-[#e6e9ed]">
                {g.title}
                <Caret big className="text-[#e6e9ed]" />
              </div>
              <div className="pl-[11px]">
                {g.rows.map((r) => (
                  <div key={r.k} className="flex h-[12.700px] border-b border-l border-r border-[#333a48] leading-[12px]">
                    <div className="w-[81px] whitespace-pre pl-[4px] text-[#bdc2cb]">{r.k}</div>
                    <div className={clsx('flex flex-1 items-center border-l border-[#333a48] pl-[2px]', r.dim ? 'text-[#858b98]' : 'text-[#dcdfe4]')}>
                      {r.kind === 'swatch' && <div className="ml-[1px] mr-[4px] size-[8px] bg-white" />}
                      {r.kind === 'line' && <div className="ml-[1px] mr-[3px] h-px w-[42px] bg-[#b4b9c2]" />}
                      {r.v}
                    </div>
                  </div>
                ))}
              </div>
            </div>
          ))}
        </div>
      </div>
    </aside>
  )
}

function StatusBar() {
  return (
    <div className="flex h-[20px] items-start pl-[9px] pt-px text-[#dcdfe4]">
      <div className="flex h-[12px] w-[36px] items-center justify-center rounded-b-[4px] bg-[#3b4253] font-bold">Model</div>
      <div className="ml-[3px] flex h-[12px] w-[34px] items-center justify-center rounded-b-[4px] bg-[#2b323e] text-[#a3a9b4]">D-Size</div>
      <div className="ml-[5px] flex h-[12px] w-[14px] items-center justify-center rounded-b-[4px] bg-[#2b323e]">
        <svg viewBox="0 0 6 6" className="size-[6px]"><path d="M3 0v6M0 3h6" stroke="#a3a9b4" strokeWidth="1.200" /></svg>
      </div>
      <div className="ml-auto flex h-[18px] items-center gap-px [&>div]:bg-[#323949]">
        <Slot w={31}><span>MODEL</span></Slot>
        <Slot w={42}>
          <svg viewBox="0 0 42 18" className="w-[42px]" fill="none" stroke="#cfd3d9">
            <path d="M6 4v10M10 4v10M3 7h10M3 11h10" />
            <path d="M20 5h9M20 9h9M20 13h9" strokeDasharray="1.500 2" strokeWidth="1.500" />
            <path d="M35 7.500h5l-2.500 3.500z" fill="#cfd3d9" stroke="none" />
          </svg>
        </Slot>
        <Slot w={115}>
          <svg viewBox="0 0 115 18" className="w-[115px]" fill="none" stroke="#b6bbc4">
            <path d="M4.500 4v10h10M4.500 9h4v5" />
            <circle cx="25" cy="10" r="4.500" /><path d="M25 10l6-6M25 10h7" />
            <path d="M36.500 7.500h5L39 11zM62.500 7.500h5L65 11zM106.500 7.500h5L109 11z" fill="#cfd3d9" stroke="none" />
            <path d="M47.500 4l9 10" stroke="#8c929d" /><path d="M52 3v8" stroke="#5f9b6e" /><path d="M52 11v4" stroke="#9a4f5a" />
            <path d="M84.500 4L75 13.500h10" />
            <path d="M88.500 1.500h15v15h-15z" fill="#4d7fb0" stroke="none" />
            <path d="M92 6v7h8.500V5h-7" stroke="#dfe9f3" /><path d="M90.500 3.500h3v3h-3z" stroke="#dfe9f3" />
          </svg>
        </Slot>
        <Slot w={71}>
          <div className="flex items-center">
            <svg viewBox="0 0 48 18" className="w-[48px]" fill="#e6e9ed">
              <path d="M.5 1.500h15v15h-15zM16.500 1.500h15v15h-15z" fill="#4d7fb0" />
              <path d="M7 5h2l1 4 3 4h-2l-3-3-3 3H3l3-4zM23 5h2l1 4 3 4h-2l-3-3-3 3h-2l3-4zM39 5h2l1 4 3 4h-2l-3-3-3 3h-2l3-4z" />
              <circle cx="12" cy="4.500" r="1.500" fill="none" stroke="#e6e9ed" strokeWidth=".8" /><path d="M29 3l-2 2.500h3L28 8" fill="none" stroke="#e6e9ed" strokeWidth=".8" />
            </svg>
            <span className="ml-[2px] mr-[3px]">1:1</span>
            <Caret big />
          </div>
        </Slot>
        <Slot w={44}>
          <div className="flex items-center gap-[7px]">
            <Ico n="gear" className="size-[12px] text-[#e0e3e7]" />
            <Caret big />
            <svg viewBox="0 0 12 12" className="-ml-px size-[11px]"><path d="M6 0v12M0 6h12" stroke="#e0e3e7" strokeWidth="1.300" /></svg>
          </div>
        </Slot>
        <Slot w={69}>
          <div className="flex items-center gap-[7px]">
            <svg viewBox="0 0 12 12" className="size-[11px]"><path d="M1 3l5-3 5 3-5 3z" fill="#dfe3e8" /><path d="M1 4.500l5 3 5-3v3l-5 3-5-3z" fill="#5ba0cf" /><path d="M1 9l5 3 5-3-5 2z" fill="#dfe3e8" /></svg>
            <span className="text-[8.500px] tracking-[-0.200px]">3.5000</span>
            <svg viewBox="0 0 12 12" className="size-[11px]" fill="none" stroke="#b6bbc4"><path d="M1 1h4v4H1zM4 11l2.500-4L9 11z" /><circle cx="9.500" cy="4" r="2" /></svg>
          </div>
        </Slot>
        <Slot w={52}>
          <svg viewBox="0 0 52 18" className="w-[52px]" fill="none">
            <path d="M1 1.500h15v15H1z" fill="#4a6f9b" /><circle cx="8.500" cy="9" r="4.500" fill="#64748f" stroke="#a8b3c2" />
            <path d="M21 3v11h10" stroke="#2b3f9a" strokeWidth="1.500" /><path d="M21 14l6-8M26 4v6M28.500 4v4" stroke="#a02035" strokeWidth="1.500" />
            <path d="M35 4h11v8H35z" fill="#d6d9dd" /><path d="M36 10l3-4 2 3 3-4" stroke="#667" /><path d="M40 15l3.500-6 3.500 6z" fill="#e79a4f" />
          </svg>
        </Slot>
        <Slot w={33}>
          <svg viewBox="0 0 33 18" className="w-[33px]" fill="none" stroke="#dfe2e6">
            <path d="M2.500 5.500h10v8h-10zM7 9l3-2M5 11h2" /><path d="M18 4.500h11M18 9h11M18 13.500h11" strokeWidth="1.400" />
          </svg>
        </Slot>
      </div>
    </div>
  )
}

const apps: { id: string; run?: boolean; art: ReactNode }[] = [
  { id: 'start', art: <path d="M0 0h7.700v7.700H0zM8.300 0H16v7.700H8.300zM0 8.300h7.700V16H0zM8.300 8.300H16V16H8.300z" fill="#1583d8" /> },
  { id: 'search', art: <><circle cx="9" cy="6.500" r="5.200" fill="#eaf4f8" stroke="#222" strokeWidth="1.500" /><path d="M5.500 10.500L1.500 15" stroke="#222" strokeWidth="1.800" /></> },
  { id: 'files', run: true, art: <><path d="M0 1h6l2 2h8v11H0z" fill="#e5a822" /><path d="M0 5h16v9H0z" fill="#fbd04f" /><path d="M4 9h8l1 5H3z" fill="#1b72b8" /></> },
  { id: 'settings', art: <><circle cx="8" cy="8" r="4.700" fill="none" stroke="#5d666e" strokeWidth="3.500" /><path d="M8 0v16M0 8h16M2.300 2.300l11.400 11.400M13.700 2.300L2.300 13.700" stroke="#5d666e" strokeWidth="3" strokeDasharray="2.500 11" /><circle cx="8" cy="8" r="3" fill="#d8e4ec" stroke="#3a78b0" /></> },
  { id: 'edge', art: <><circle cx="8" cy="8" r="8" fill="#1270b8" /><path d="M.3 7C1 2 5 0 8 0c5 0 8 3.500 8 7 0 3-3 4-6 3 1-1 1-4-2-4.500C5 5 1.500 5.500.3 7z" fill="#43c2a5" /><path d="M7 7c-2 3 0 7 6 6" fill="none" stroke="#d9ecf2" strokeWidth="1.500" /></> },
  { id: 'outlook', art: <><path d="M6 1h10v13H6z" fill="#2a9be0" /><path d="M6 1h5v6H6z" fill="#1a6fc0" /><path d="M6 9l5 2 5-2v5H6z" fill="#5cc0f0" /><path d="M0 4h8v8H0z" fill="#0f5aa8" /><circle cx="4" cy="8" r="2" fill="none" stroke="#fff" strokeWidth="1.200" /></> },
  { id: 'chrome', run: true, art: <><circle cx="8" cy="8" r="7.500" fill="#e0443a" /><path d="M1 5l5 9.500C2 14 .5 11 .5 8z" fill="#2e9e4f" /><path d="M1 4.500L6.500 15 9 11 4 9z" fill="#2e9e4f" /><path d="M15 5H8l3 5-4 5.500c5 0 8.500-3.500 8.500-7.500z" fill="#f6c52f" /><circle cx="8" cy="8" r="3.500" fill="#3d7fe0" stroke="#fff" /></> },
  { id: 'civil', run: true, art: <><path d="M11.500 4.500C9 0 4 2 4 7s5 7 7.500 3.500" fill="none" stroke="#1d6ea8" strokeWidth="3" /><path d="M10 14h3" stroke="#555" /></> },
  { id: 'carlson', run: true, art: <><path d="M0 0h16v16H0z" fill="#143a6e" /><path d="M0 8h8l3 8H0z" fill="#2f8f4e" /><path d="M6 0h5c-3 4 0 9 5 11v3C7 13 2 7 6 0z" fill="#f2f6f8" /></> },
  { id: 'teams', run: true, art: <><circle cx="9" cy="3.500" r="2.500" fill="#6f74d0" /><path d="M5 6h10v7c-3 3-8 3-10 0z" fill="#5b62c3" /><path d="M0 4h8v8H0z" fill="#454bb0" /><path d="M2 6h4M4 6v4.500" stroke="#fff" strokeWidth="1.200" /><circle cx="14" cy="2.500" r="3" fill="#8cc63f" /></> },
  { id: 'camtasia', run: true, art: <><rect width="16" height="16" rx="1.500" fill="#4f9b1e" /><path d="M11.500 4H5v8h6.500" fill="none" stroke="#fff" strokeWidth="2" /></> },
  { id: 'recorder', run: true, art: <><rect width="16" height="16" rx="1.500" fill="#e2493b" /><path d="M11.500 4H5v8h6.500" fill="none" stroke="#fff" strokeWidth="2" /></> },
]

function Taskbar() {
  return (
    <div className="flex h-[32px] items-center bg-gradient-to-r from-[#dfe5e6] via-[#dbebf1] via-35% to-[#d8ecf3] pl-[464.300px] text-[#3a4248]">
      {apps.map((a) => (
        <div key={a.id} className="flex h-full w-[29.350px] shrink-0 flex-col items-center pt-[4px]">
          <div className={clsx('flex h-[23px] w-[24px] items-center justify-center rounded-[3px]', a.id === 'civil' && 'bg-[#f3f9fb]')}>
            <svg viewBox="0 0 16 16" className="size-[15.500px] overflow-visible">{a.art}</svg>
          </div>
          {a.run && <div className={clsx('h-[2px] rounded-full', a.id === 'civil' ? 'w-[10px] bg-[#3f7f8c]' : 'w-[4px] bg-[#7c868c]')} />}
        </div>
      ))}
      <svg viewBox="0 0 110 16" className="ml-[284px] h-[16px] w-[110px] shrink-0" fill="none" stroke="#333">
        <path d="M7 10l4-4 4 4" strokeWidth="1.200" />
        <path d="M21 11c-1-3 1-4 3-4 1-3 6-3 7 1l-3 3z" fill="#1677c8" stroke="none" /><circle cx="29" cy="10.500" r="2.500" fill="#fff" stroke="#1677c8" />
        <path d="M43.500 3h3v6h-3zM41.500 7c0 5 7 5 7 0M45 11v2.500" stroke="#5b7076" />
        <path d="M66 4.500h-5v6.500h8V8M62 13.500h6M68.500 7v3M67 3.500h4v3h-4z" />
        <path d="M77 6.500h2l2.500-2.500v8L79 9.500h-2zM84 6c1 1.500 1 2.500 0 4M86 4.500c1.500 2.500 1.500 4.500 0 7" strokeWidth=".9" />
        <path d="M95 5.500h8v6h-8z" fill="#222" /><path d="M104.500 7.500v2" /><circle cx="95.500" cy="5.500" r="2" fill="#222" stroke="none" />
      </svg>
      <div className="ml-[1px] w-[39px] text-right text-[8.500px] leading-[10.500px] tracking-[-0.100px]">
        <div>6:06 AM</div>
        <div>9/22/2022</div>
      </div>
      <div className="ml-[4px] flex size-[13px] items-center justify-center rounded-full bg-[#1f7f8c] text-[8px] text-white">12</div>
    </div>
  )
}

export default function App() {
  return (
    <div className="flex h-[720px] w-[1280px] flex-col overflow-hidden bg-[#222933] font-['Open_Sans','Noto_Sans',sans-serif] text-[8.300px] leading-[12px] tracking-[-0.380px]">
      <AppHeader />
      <div className="flex h-[15px] items-end pl-[3px] text-[#c6cad1]">
        <div className="mr-[7px] flex h-[14px] w-[34px] items-center justify-center bg-[#3b4253] tracking-[-0.200px] text-[#eceef1]">Home</div>
        {ribbonTabs.map((t) => (
          <span key={t.label} className="shrink-0 whitespace-nowrap leading-[14px]" style={{ width: t.w }}>{t.label}</span>
        ))}
        <div className="mb-[4px] flex h-[6px] w-[11px] items-center justify-center bg-[#d5d8dc]">
          <svg viewBox="0 0 4 3" className="h-[2px] w-[4px]"><path d="M0 3h4L2 0z" fill="#333" /></svg>
        </div>
        <Caret className="mb-[5px] ml-[2px] text-[#aab0bb]" />
      </div>
      <Ribbon />
      <DocTabs />
      <div className="flex h-[539px]">
        <div className="flex w-4 shrink-0 flex-col items-center border-x border-[#2f3644] bg-[#3b4253] text-[#d0d4da]">
          <div className="mt-[5px] h-[2px] w-[7px] bg-[#7a808c]" />
          <div className="flex flex-1 items-center justify-center tracking-[-0.100px] [writing-mode:vertical-rl]"><span className="rotate-180">Toolspace</span></div>
        </div>
        <main className="relative flex-1 overflow-hidden bg-black">
          <ModelSpace />
          <div className="pl-[3px] pt-[4px] tracking-[-0.280px] text-[#d4d4d4]">
            [−][Top][2D Wireframe]
            <svg viewBox="0 0 12 10" className="h-[9px] w-[11px]"><path d="M1 9V7l2-2 2 2v2zM5 4a2 2 0 014-1 1 1 0 010 2H6z" fill="#ddd" /></svg>
          </div>
          <CommandLine />
          <Dialog />
          <svg viewBox="0 0 12 16" className="absolute left-[572px] top-[372px] h-[14px] w-[9px]">
            <path d="M1 1v12l3-3 2 5 2-1-2-5h4z" fill="#fff" stroke="#222" />
          </svg>
        </main>
        <Properties />
      </div>
      <StatusBar />
      <Taskbar />
    </div>
  )
}
